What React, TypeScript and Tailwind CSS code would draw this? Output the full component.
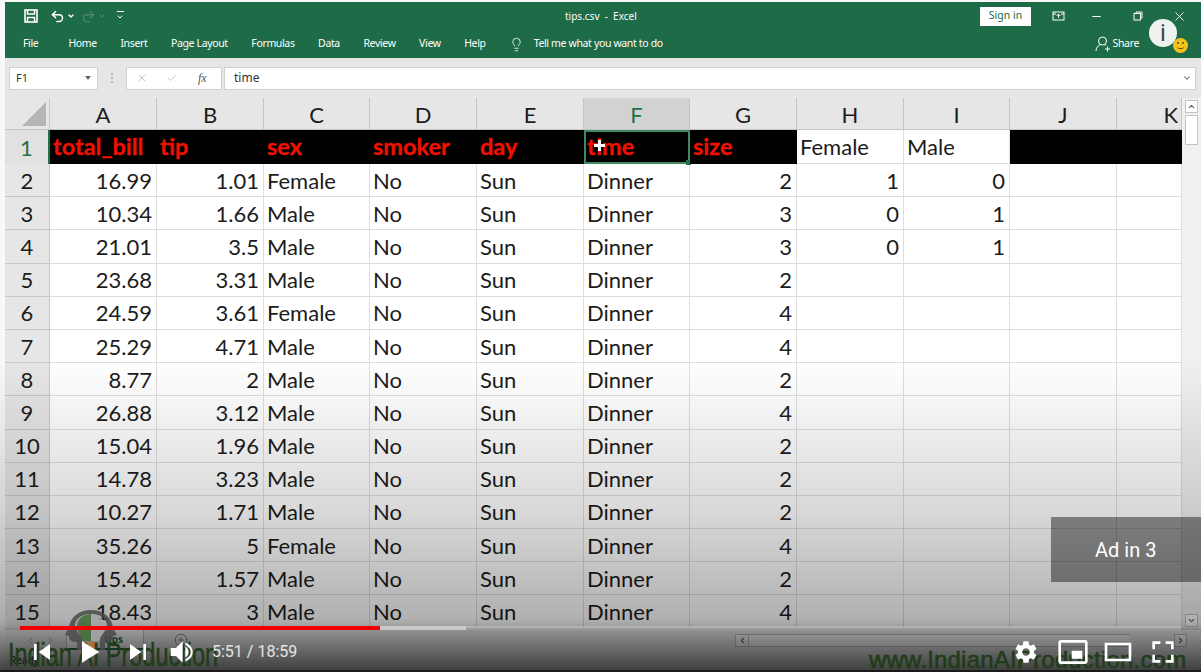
import { Lightbulb, Undo2, Redo2, X, Check, ChevronDown, ChevronUp, ChevronLeft, ChevronRight, Minus, PlusCircle } from 'lucide-react'

const columns = [
  { name: 'A', width: 'w-[107px]' },
  { name: 'B', width: 'w-[107px]' },
  { name: 'C', width: 'w-[106px]' },
  { name: 'D', width: 'w-[107px]' },
  { name: 'E', width: 'w-[107px]' },
  { name: 'F', width: 'w-[106px]' },
  { name: 'G', width: 'w-[107px]' },
  { name: 'H', width: 'w-[107px]' },
  { name: 'I', width: 'w-[106px]' },
  { name: 'J', width: 'w-[107px]' },
  { name: 'K', width: 'w-[65px]' },
]

const tabs = ['Home', 'Insert', 'Page Layout', 'Formulas', 'Data', 'Review', 'View', 'Help']

const headers = ['total_bill', 'tip', 'sex', 'smoker', 'day', 'time', 'size']

// total_bill, tip, sex, size
const rows: [string, string, string, string][] = [
  ['16.99', '1.01', 'Female', '2'],
  ['10.34', '1.66', 'Male', '3'],
  ['21.01', '3.5', 'Male', '3'],
  ['23.68', '3.31', 'Male', '2'],
  ['24.59', '3.61', 'Female', '4'],
  ['25.29', '4.71', 'Male', '4'],
  ['8.77', '2', 'Male', '2'],
  ['26.88', '3.12', 'Male', '4'],
  ['15.04', '1.96', 'Male', '2'],
  ['14.78', '3.23', 'Male', '2'],
  ['10.27', '1.71', 'Male', '2'],
  ['35.26', '5', 'Female', '4'],
  ['15.42', '1.57', 'Male', '2'],
  ['18.43', '3', 'Male', '4'],
]

const dummies: Record<number, [string, string]> = {
  0: ['1', '0'],
  1: ['0', '1'],
  2: ['0', '1'],
}

function Cell({ index, align, children }: { index: number; align?: 'right'; children?: React.ReactNode }) {
  return (
    <div
      className={`${columns[index].width} shrink-0 h-full border-r border-b border-[#dedede] pl-[3px] pr-[4px] flex items-center whitespace-nowrap ${
        align === 'right' ? 'justify-end' : ''
      }`}
    >
      {children}
    </div>
  )
}

function SaveIcon() {
  return (
    <svg width="14" height="14" viewBox="0 0 14 14" fill="none" stroke="white" strokeWidth="1.6">
      <rect x="1" y="1" width="12" height="12" />
      <path d="M3.5 1v4h7V1M3.5 13V8.5h7V13" />
    </svg>
  )
}

function ShareIcon() {
  return (
    <svg width="16" height="16" viewBox="0 0 16 16" fill="none" stroke="white" strokeWidth="1" className="ml-auto">
      <circle cx="7.5" cy="5" r="4" />
      <path d="M1 15c0-3.5 2.5-6 5-6.5M9 8.500c.8.200 1.500.500 2 1M10 13h5M12.500 10.500v5" />
    </svg>
  )
}

function PlayerIcon({ d, evenOdd }: { d: string; evenOdd?: boolean }) {
  return (
    <svg width="48" height="48" viewBox="0 0 36 36" fill="white" className="shrink-0">
      <path d={d} fillRule={evenOdd ? 'evenodd' : 'nonzero'} />
    </svg>
  )
}

function WatermarkLogo() {
  return (
    <svg width="58" height="44" viewBox="0 0 58 44" className="absolute left-[62px] top-[608px] opacity-85">
      {/* two heads facing away from each other */}
      <path d="M15 42V34C9 34 7 32 7 28L3 27 7 20C8 9 17 2 29 2S50 9 51 20L55 27 51 28C51 32 49 34 43 34V42H38V29C43 24 45 20 45 17 44 10 38 6 29 6S14 10 13 17C13 20 15 24 20 29V42Z" fill="#4a4a4a" />
      {/* bulb */}
      <path d="M29 6C21 6 15 11 15 18 15 24 19 27 21 33H29Z" fill="#3f6b34" />
      <path d="M29 6C37 6 43 11 43 18 43 24 39 27 37 33H29Z" fill="#a4a4a4" />
      <path d="M22 34H36L34 41H24Z" fill="#b5702d" />
    </svg>
  )
}

export default function App() {
  return (
    <div className="relative w-[1201px] h-[672px] overflow-hidden bg-[#f8f8f8] pl-[5px] pt-[2px] flex flex-col font-['Lato',sans-serif] text-[22px] text-[#1c1c1c]">
      {/* Title bar */}
      <div className="h-[28px] shrink-0 bg-[#1d6b47] flex items-center text-white font-['Noto_Sans',sans-serif] text-[10px]">
        <div className="w-[480px] flex items-center pl-[19px]">
          <SaveIcon />
          <Undo2 size={15} strokeWidth={2.4} className="ml-[12px]" />
          <ChevronDown size={8} strokeWidth={4} className="ml-[2px]" />
          <Redo2 size={15} strokeWidth={2} className="ml-[6px] text-[#4f8a6c]" />
          <ChevronDown size={8} strokeWidth={3} className="ml-[2px] text-[#4f8a6c]" />
          <div className="ml-[10px] w-[8px] flex flex-col items-center gap-[1px]">
            <div className="w-[7px] h-px bg-white" />
            <ChevronDown size={8} strokeWidth={3} />
          </div>
        </div>
        <div className="ml-[80px] whitespace-pre">tips.csv  -  Excel</div>
        <div className="ml-auto bg-white text-[#1d6b47] w-[51px] h-[19px] flex items-center justify-center text-[10.5px]">Sign in</div>
        <svg width="13" height="10" viewBox="0 0 13 10" className="ml-[21px]" fill="none" stroke="white">
          <rect x="1" y="1" width="11" height="8" />
          <path d="M6.5 7V3M4.500 5l2-2 2 2M1 3h3M9 3h3" />
        </svg>
        <Minus size={13} className="ml-[25px]" />
        <svg width="10" height="10" viewBox="0 0 10 10" className="ml-[30px]" fill="none" stroke="white">
          <rect x="1" y="2.5" width="6.5" height="6.5" />
          <path d="M3 2.5V1h6v6H7.500" />
        </svg>
        <X size={15} strokeWidth={1.4} className="ml-[29px] mr-[14px]" />
      </div>

      {/* Ribbon tabs */}
      <div className="h-[28px] shrink-0 bg-[#1d6b47] flex items-center text-white font-['Noto_Sans',sans-serif] text-[10.5px] tracking-[-0.35px]">
        <span className="ml-[18px] mr-[30px]">File</span>
        <div className="flex items-center gap-[23.500px]">
          {tabs.map((tab) => (
            <span key={tab}>{tab}</span>
          ))}
        </div>
        <Lightbulb size={15} strokeWidth={1.3} className="ml-[23px]" />
        <span className="ml-[10px]">Tell me what you want to do</span>
        <ShareIcon />
        <span className="ml-[2px] mr-[62px]">Share</span>
      </div>

      {/* Formula bar */}
      <div className="h-[40px] shrink-0 bg-[#e6e6e6] flex items-center pl-[4px] pr-[5px] font-['Noto_Sans',sans-serif] text-[11px] text-[#333333]">
        <div className="w-[89px] h-[23px] bg-white border border-[#d0d0d0] flex items-center justify-between px-[6px]">
          <span>F1</span>
          <span className="w-0 h-0 border-x-[3px] border-x-transparent border-t-[4px] border-t-[#666666]" />
        </div>
        <div className="w-[28px] flex flex-col items-center gap-[2px]">
          <span className="w-[2px] h-[2px] bg-[#b5b5b5]" />
          <span className="w-[2px] h-[2px] bg-[#b5b5b5]" />
          <span className="w-[2px] h-[2px] bg-[#b5b5b5]" />
        </div>
        <div className="w-[96px] h-[23px] bg-white border border-[#d0d0d0] flex items-center pl-[9px] text-[#b0b0b0]">
          <X size={12} strokeWidth={1.5} />
          <Check size={12} strokeWidth={1.5} className="ml-[18px]" />
          <span className="ml-[20px] text-[#555555] italic font-['Liberation_Serif',serif] text-[12px]">fx</span>
        </div>
        <div className="flex-1 h-[23px] ml-[2px] bg-white border border-[#d0d0d0] flex items-center justify-between pl-[9px] pr-[3px] text-[12px]">
          <span>time</span>
          <ChevronDown size={10} strokeWidth={2.5} className="text-[#666666]" />
        </div>
      </div>

      {/* Sheet */}
      <div className="h-[530px] shrink-0 flex overflow-hidden bg-white">
        <div className="w-[1177px] shrink-0 flex flex-col">
          <div className="h-[32px] shrink-0 flex bg-[#e6e6e6]">
            <div className="w-[45px] shrink-0 h-full bg-[#e6e6e6] border-r border-b border-[#c8c8c8] flex items-end justify-end pr-[3px] pb-[3px]">
              <span className="w-0 h-0 border-l-[24px] border-l-transparent border-b-[24px] border-b-[#b5b5b5]" />
            </div>
            {columns.map((col) => (
              <div
                key={col.name}
                className={`${col.width} shrink-0 flex items-center justify-center pt-[1px] border-r border-b border-[#c4c4c4] ${
                  col.name === 'F' ? 'bg-[#d2d2d2] text-[#217346]' : ''
                } ${col.name === 'K' ? 'justify-end pr-[3px]' : ''}`}
              >
                {col.name}
              </div>
            ))}
          </div>

          {/* Row 1 */}
          <div className="h-[34px] shrink-0 flex">
            <div className="w-[45px] shrink-0 bg-[#e1e1e1] text-[#217346] border-r-2 border-[#217346] flex items-center justify-center">1</div>
            {headers.map((name, i) => (
              <div key={name} className={`${columns[i].width} relative shrink-0 h-full bg-black pl-[3px] flex items-center text-[#f01000] font-bold text-[23.500px] [-webkit-text-stroke:0.3px_#f01000]`}>
                {name}
                {name === 'time' && (
                  <div className="absolute inset-0 border-2 border-[#3f8a63]">
                    <span className="absolute right-[-3px] bottom-[-3px] w-[5px] h-[5px] bg-[#217346]" />
                    <span className="absolute left-[8px] top-[12px] w-[11px] h-[3px] bg-white" />
                    <span className="absolute left-[12px] top-[8px] w-[3px] h-[11px] bg-white" />
                  </div>
                )}
              </div>
            ))}
            <Cell index={7}>Female</Cell>
            <Cell index={8}>Male</Cell>
            <div className="w-[172px] shrink-0 bg-black" />
          </div>

          {rows.map((row, i) => (
            <div key={i} className="h-[33.2px] shrink-0 flex">
              <div className="w-[45px] shrink-0 h-full bg-[#e6e6e6] border-r border-b border-[#c8c8c8] flex items-center justify-center">{i + 2}</div>
              <Cell index={0} align="right">{row[0]}</Cell>
              <Cell index={1} align="right">{row[1]}</Cell>
              <Cell index={2}>{row[2]}</Cell>
              <Cell index={3}>No</Cell>
              <Cell index={4}>Sun</Cell>
              <Cell index={5}>Dinner</Cell>
              <Cell index={6} align="right">{row[3]}</Cell>
              <Cell index={7} align="right">{dummies[i]?.[0]}</Cell>
              <Cell index={8} align="right">{dummies[i]?.[1]}</Cell>
              <Cell index={9} />
              <Cell index={10} />
            </div>
          ))}
        </div>

        {/* Vertical scrollbar */}
        <div className="flex-1 bg-[#f0f0f0] flex flex-col items-center pt-[2px]">
          <div className="w-[13px] h-[13px] bg-white border border-[#c4c4c4] flex items-center justify-center">
            <ChevronUp size={9} strokeWidth={3} className="text-[#666666]" />
          </div>
          <div className="w-[13px] h-[30px] mt-[2px] bg-white border border-[#c4c4c4]" />
          <div className="w-[13px] h-[13px] mt-auto mb-[1px] bg-white border border-[#c4c4c4] flex items-center justify-center">
            <ChevronDown size={9} strokeWidth={3} className="text-[#666666]" />
          </div>
        </div>
      </div>

      {/* Sheet tabs and status bar */}
      <div className="flex-1 bg-[#f0f0f0] border-t-2 border-[#d8d8d8] relative flex flex-col font-['Noto_Sans',sans-serif] text-[11px] text-[#333333]">
        <div className="h-[20px] shrink-0 flex items-center">
          <ChevronLeft size={11} className="ml-[20px] text-[#999999]" />
          <ChevronRight size={11} className="ml-[9px] text-[#999999]" />
          <div className="ml-[10px] w-[78px] h-full border-x border-b-2 border-x-[#c4c4c4] border-b-[#217346] bg-white flex items-center justify-end pr-[20px] text-[#217346] font-bold text-[10px]">tips</div>
          <PlusCircle size={14} strokeWidth={1.2} className="ml-[30px] text-[#666666]" />
          <div className="ml-auto mr-[14px] flex items-center">
            <div className="w-[14px] h-[13px] bg-white border border-[#c4c4c4] flex items-center justify-center">
              <ChevronLeft size={9} strokeWidth={3} className="text-[#666666]" />
            </div>
            <div className="w-[381px] h-[13px] bg-white border-y border-[#c4c4c4]" />
            <div className="w-[44px] h-[13px]" />
            <div className="w-[13px] h-[13px] bg-white border border-[#c4c4c4] flex items-center justify-center">
              <ChevronRight size={9} strokeWidth={3} className="text-[#666666]" />
            </div>
          </div>
        </div>
        <div className="pl-[5px] pt-[3px] text-[10px]">Ready</div>
      </div>

      {/* Video player overlay */}
      <div className="absolute left-0 right-0 top-[360px] bottom-0 bg-[linear-gradient(to_bottom,rgba(0,0,0,0)_0%,rgba(0,0,0,0.15)_48%,rgba(0,0,0,0.31)_83%,rgba(0,0,0,0.75)_100%)]" />

      <WatermarkLogo />
      <div className="absolute left-[8px] top-[636px] origin-left scale-x-[0.69] whitespace-nowrap font-['Liberation_Sans',sans-serif] text-[34px] leading-[36px] text-[#1f3d18] [-webkit-text-stroke:0.5px_#1f3d18]">
        Indian AI Production
      </div>
      <div className="absolute left-[869px] top-[646px] whitespace-nowrap font-['Liberation_Sans',sans-serif] text-[24px] leading-[28px] tracking-[0.2px] text-[#1f3d18] [-webkit-text-stroke:0.6px_#1f3d18]">
        www.IndianAIProduction.com
      </div>

      {/* Countdown */}
      <div className="absolute right-0 top-[517px] w-[150px] h-[65px] bg-[rgba(0,0,0,0.42)] flex items-center pl-[44px] font-['Roboto',sans-serif] text-[20px] text-white">
        Ad in 3
      </div>

      {/* Progress */}
      <div className="absolute left-[20px] right-[20px] top-[626px] h-[4px] bg-[rgba(255,255,255,0.2)] flex">
        <div className="w-[360px] h-full bg-[#f00000]" />
        <div className="w-[86px] h-full bg-[#c8c8c8]" />
      </div>

      {/* Controls */}
      <div className="absolute left-[18px] right-[14px] top-[628px] h-[48px] flex items-center text-white">
        <PlayerIcon d="m 12,12 h 2 v 12 h -2 z m 3.5,6 8.5,6 V 12 z" />
        <PlayerIcon d="M 12,26 18.5,22 18.5,14 12,10 z M 18.5,22 25,18 25,18 18.5,14 z" />
        <PlayerIcon d="M 12,24 20.5,18 12,12 V 24 z M 22,12 v 12 h 2 V 12 h -2 z" />
        <div className="-ml-[2px]">
          <PlayerIcon d="M8,21 L12,21 L17,26 L17,10 L12,15 L8,15 L8,21 Z M19,14 L19,22 C20.48,21.32 21.5,19.77 21.5,18 C21.5,16.26 20.48,14.74 19,14 Z M19,11 C22,12 24.500,14.500 24.500,18 C24.500,21.500 22,24 19,25 L19,23.500 C21,22.500 23,20.500 23,18 C23,15.500 21,13.500 19,12.500 Z" />
        </div>
        <span className="ml-[4px] font-['Roboto',sans-serif] text-[16px] text-[#e6e6e6] whitespace-pre">5:51 / 18:59</span>
        <div className="ml-auto flex items-center">
          <PlayerIcon d="m 23.94,18.78 c .03,-0.25 .05,-0.51 .05,-0.78 0,-0.27 -0.02,-0.52 -0.05,-0.78 l 1.68,-1.32 c .15,-0.12 .19,-0.33 .09,-0.51 l -1.6,-2.76 c -0.09,-0.17 -0.31,-0.24 -0.48,-0.17 l -1.99,.8 c -0.41,-0.32 -0.86,-0.58 -1.35,-0.78 l -0.30,-2.12 c -0.02,-0.19 -0.19,-0.33 -0.39,-0.33 l -3.2,0 c -0.2,0 -0.36,.14 -0.39,.33 l -0.30,2.12 c -0.48,.2 -0.93,.47 -1.35,.78 l -1.99,-0.8 c -0.18,-0.07 -0.39,0 -0.48,.17 l -1.6,2.76 c -0.10,.17 -0.05,.39 .09,.51 l 1.68,1.32 c -0.03,.25 -0.05,.52 -0.05,.78 0,.26 .02,.52 .05,.78 l -1.68,1.32 c -0.15,.12 -0.19,.33 -0.09,.51 l 1.6,2.76 c .09,.17 .31,.24 .48,.17 l 1.99,-0.8 c .41,.32 .86,.58 1.35,.78 l .30,2.12 c .02,.19 .19,.33 .39,.33 l 3.2,0 c .2,0 .36,-0.14 .39,-0.33 l .30,-2.12 c .48,-0.2 .93,-0.47 1.35,-0.78 l 1.99,.8 c .18,.07 .39,0 .48,-0.17 l 1.6,-2.76 c .09,-0.17 .05,-0.39 -0.09,-0.51 l -1.68,-1.32 0,0 z m -5.94,2.01 c -1.54,0 -2.8,-1.25 -2.8,-2.8 0,-1.54 1.25,-2.8 2.8,-2.8 1.54,0 2.8,1.25 2.8,2.8 0,1.54 -1.25,2.8 -2.8,2.8 l 0,0 z" />
          <div className="-ml-[1px]">
            <PlayerIcon d="M25,17 L17,17 L17,23 L25,23 L25,17 L25,17 Z M29,25 L29,10.98 C29,9.88 28.1,9 27,9 L9,9 C7.9,9 7,9.88 7,10.98 L7,25 C7,26.1 7.9,27 9,27 L27,27 C28.1,27 29,26.1 29,25 L29,25 Z M27,25.02 L9,25.02 L9,10.97 L27,10.97 L27,25.02 L27,25.02 Z" />
          </div>
          <div className="-ml-[3px]">
            <PlayerIcon evenOdd d="m 28,11 0,14 -20,0 0,-14 z m -18,2 16,0 0,10 -16,0 0,-10 z" />
          </div>
          <div className="-ml-[3px]">
            <PlayerIcon d="m 10,16 2,0 0,-4 4,0 0,-2 L 10,10 l 0,6 0,0 z m 10,-6 0,2 4,0 0,4 2,0 L 26,10 l -6,0 0,0 z m 4,14 -4,0 0,2 L 26,26 l 0,-6 -2,0 0,4 0,0 z M 12,20 10,20 10,26 l 6,0 0,-2 -4,0 0,-4 0,0 z" />
          </div>
        </div>
      </div>

      {/* Info card */}
      <div className="absolute left-[1149px] top-[19px] w-[28px] h-[28px] rounded-full bg-[#eef3f0] flex items-center justify-center font-['Roboto',sans-serif] text-[24px] leading-none text-[#444444]">
        i
      </div>
      <div className="absolute left-[1173px] top-[38px] w-[15px] h-[15px] rounded-full bg-[#f3c21b]">
        <span className="absolute left-[4px] top-[4px] w-[2px] h-[2px] rounded-full bg-[#5a4500]" />
        <span className="absolute right-[4px] top-[4px] w-[2px] h-[2px] rounded-full bg-[#5a4500]" />
        <span className="absolute left-[4px] top-[8px] w-[7px] h-[3px] border-b border-[#5a4500] rounded-b-full" />
      </div>

      <div className="absolute left-0 right-0 bottom-0 h-[2px] bg-[#1a1a1a]" />
    </div>
  )
}
